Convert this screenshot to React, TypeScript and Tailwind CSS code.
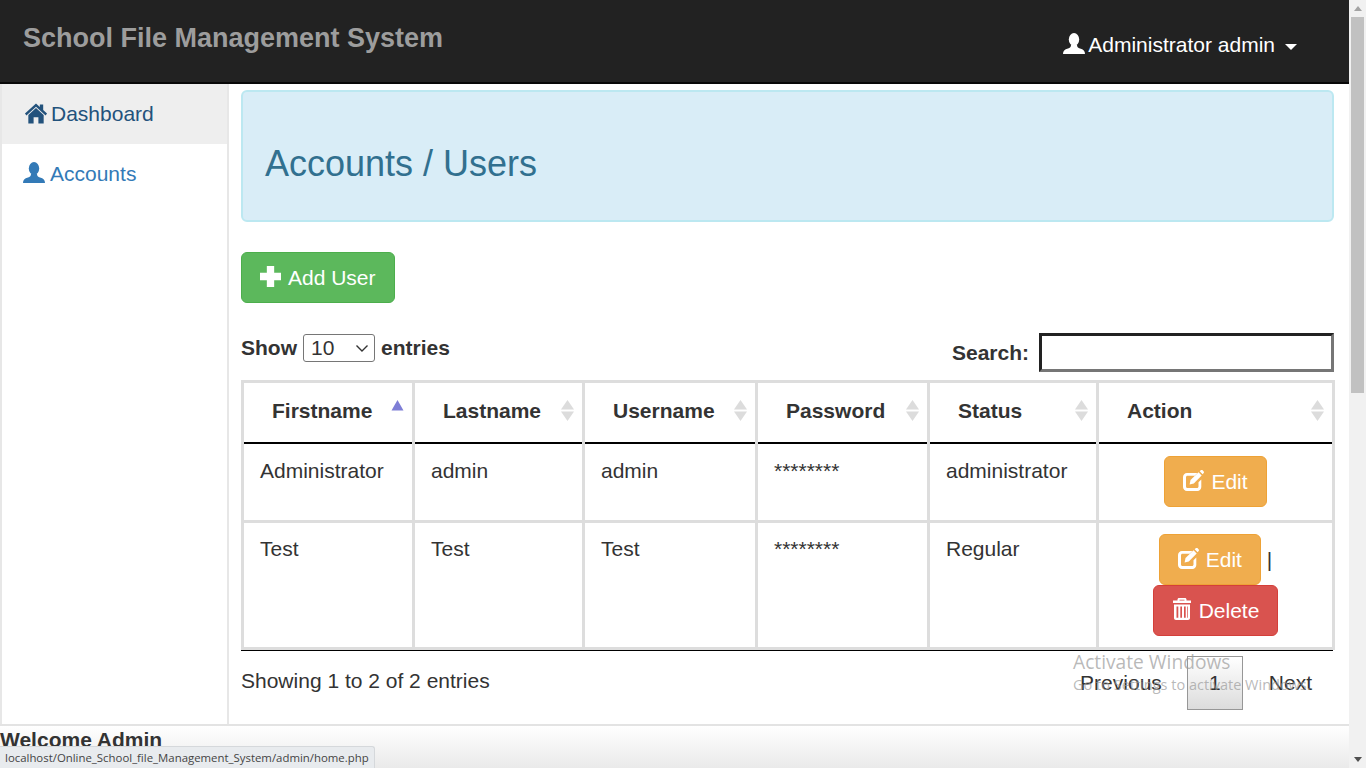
import React from "react";

const HomeIcon = ({ className }: { className?: string }) => (
  <svg viewBox="0 0 24 24" className={className} fill="currentColor">
    <path d="M12 1.5 L0.5 12 L2 14 L12 5 L22 14 L23.5 12 L19.5 8.3 V2.5 H16 V5.2 Z" />
    <path d="M4 13.6 L12 6.2 L20 13.6 V22.5 H14.5 V16 H9.5 V22.5 H4 Z" />
  </svg>
);
const UserIcon = ({ className }: { className?: string }) => (
  <svg viewBox="0 0 24 24" className={className} fill="currentColor">
    <ellipse cx="12" cy="7.5" rx="5.2" ry="6.5" />
    <path d="M1 22 C1 19 2.5 17.5 6 16.5 C8 16 9 15 9 13 H15 C15 15 16 16 18 16.5 C21.5 17.5 23 19 23 22 Z" />
  </svg>
);
const PlusIcon = ({ className }: { className?: string }) => (
  <svg viewBox="2 2 20 20" className={className} fill="currentColor">
    <path d="M8.5 2 H15.5 V8.5 H22 V15.5 H15.5 V22 H8.5 V15.5 H2 V8.5 H8.5 Z" />
  </svg>
);
const EditIcon = ({ className }: { className?: string }) => (
  <svg viewBox="2 1 21 21" className={className} fill="currentColor">
    <path d="M6 4 H16.5 L13.7 6.8 H6.5 C5.6 6.8 5 7.4 5 8.3 V17.5 C5 18.4 5.6 19 6.5 19 H16 C16.9 19 17.5 18.4 17.5 17.5 V13.3 L20.3 10.5 V18 C20.3 20.2 18.6 22 16.5 22 H6 C3.8 22 2 20.2 2 18 V8 C2 5.8 3.8 4 6 4 Z" />
    <path d="M9.5 11 L17.5 3.3 L20.7 6.5 L12.8 14.6 L8.6 15.4 Z" />
    <path d="M18.7 2.3 L20 1.1 C20.5 .7 21 .7 21.4 1.1 L22.7 2.5 C23.1 2.9 23.1 3.5 22.7 3.9 L21.6 5.2 Z" />
  </svg>
);
const TrashIcon = ({ className }: { className?: string }) => (
  <svg viewBox="3 1 18 22" className={className} fill="currentColor">
    <path d="M9 1 H15 C15.8 1 16.5 1.7 16.5 2.5 V3.5 H21 V6 H3 V3.5 H7.5 V2.5 C7.5 1.7 8.2 1 9 1 Z M9.5 2.8 V3.5 H14.5 V2.8 Z" fillRule="evenodd" />
    <path d="M4 7.5 H20 V21 C20 22.2 19.2 23 18 23 H6 C4.8 23 4 22.2 4 21 Z M6.5 9.5 V20.8 H8.3 V9.5 Z M10.3 9.5 V20.8 H12 V9.5 Z M14 9.5 V20.8 H15.7 V9.5 Z M17.2 9.5 V20.8 H17.9 V9.5 Z" fillRule="evenodd" />
  </svg>
);

const SortBoth = () => (
  <svg viewBox="0 0 13 21" className="h-[21px] w-[13px] shrink-0 text-[#dcdcdc]" fill="currentColor">
    <path d="M6.5 0 L13 9.5 H0 Z" />
    <path d="M0 11.5 H13 L6.5 21 Z" />
  </svg>
);
const SortAsc = () => (
  <svg viewBox="0 0 13 21" className="h-[21px] w-[13px] shrink-0 text-[#7e7ed6]" fill="currentColor">
    <path d="M6.5 0 L12.5 10.5 H0.5 Z" />
  </svg>
);

const btn =
  "inline-flex items-center align-middle h-[51px] px-[18px] rounded-[6px] border text-white text-[21px] leading-[30px] gap-[7px] whitespace-nowrap";

const EditButton = () => (
  <span className={`${btn} bg-[#f0ad4e] border-[#eea236]`}>
    <EditIcon className="h-[21px] w-[21px] -mt-[3px]" />
    Edit
  </span>
);

const headers = ["Firstname", "Lastname", "Username", "Password", "Status", "Action"];
const widths = ["w-[171px]", "w-[170px]", "w-[173px]", "w-[172px]", "w-[169px]", "w-[236px]"];
const td = "border-[3px] border-[#ddd] align-top pl-[16px] text-[21px] leading-[30px] text-[#333]";
const rows = [
  ["Administrator", "admin", "admin", "********", "administrator"],
  ["Test", "Test", "Test", "********", "Regular"],
];

export default function App() {
  return (
    <div className="relative flex h-[768px] w-[1366px] overflow-hidden bg-white font-['Liberation_Sans',Arial,sans-serif] text-[21px] leading-[30px] text-[#333]">
      <div className="flex w-[1349px] flex-col">
        <header className="flex h-[84px] shrink-0 items-start justify-between border-b-2 border-[#080808] bg-[#222] pl-[23px] pr-[52px]">
          <div className="mt-[23px] text-[27px] font-bold leading-[30px] text-[#9d9d9d]">School File Management System</div>
          <div className="mt-[30px] flex items-center text-white">
            <UserIcon className="mr-[2px] h-[24px] w-[24px] -mt-[3px]" />
            <span>Administrator admin</span>
            <svg viewBox="0 0 12 6" className="ml-[10px] mt-[3px] h-[6px] w-[12px]" fill="currentColor">
              <path d="M0 0 H12 L6 6 Z" />
            </svg>
          </div>
        </header>

        <div className="flex min-h-0 flex-1">
          <aside className="w-[229px] shrink-0 border-x-2 border-[#e7e7e7]">
            <div className="flex h-[60px] items-center bg-[#eee] pl-[22px] text-[#23527c]">
              <HomeIcon className="mr-[3px] h-[23px] w-[24px] -mt-[2px]" />
              Dashboard
            </div>
            <div className="flex h-[60px] items-center pl-[20px] text-[#337ab7]">
              <UserIcon className="mr-[4px] h-[24px] w-[24px] -mt-[3px]" />
              Accounts
            </div>
          </aside>

          <main className="w-[1120px] pl-[12px] pr-[15px] pt-[6px]">
            <div className="h-[132px] rounded-[6px] border-2 border-[#bce8f1] bg-[#d9edf7] pl-[22px] pt-[52px] text-[36px] leading-[40px] text-[#31708f]">
              Accounts / Users
            </div>

            <div className="mt-[30px]">
              <span className={`${btn} bg-[#5cb85c] border-[#4cae4c]`}>
                <PlusIcon className="h-[21px] w-[21px] -mt-[2px]" />
                Add User
              </span>
            </div>

            <div className="mt-[30px] flex h-[47px] items-start justify-between">
              <div className="flex items-center font-bold">
                <span>Show</span>
                <div className="relative mx-[6px] h-[28px] w-[72px]">
                  <select className="block h-[28px] w-[72px] appearance-none rounded-[3px] border border-[#767676] bg-white pb-[1px] pl-[7px] text-[21px] font-normal leading-[24px]">
                    <option>10</option>
                  </select>
                  <svg viewBox="0 0 12 7" className="pointer-events-none absolute right-[7px] top-[11px] h-[7px] w-[12px] text-[#333]" fill="none" stroke="currentColor" strokeWidth="1.4">
                    <path d="M0.5 0.5 L6 6 L11.5 0.5" />
                  </svg>
                </div>
                <span>entries</span>
              </div>
              <div className="flex items-start font-bold">
                <span className="mt-[5px]">Search:</span>
                <div className="ml-[10px] h-[39px] w-[295px] border-[3px] border-b-[#767676] border-l-[#222] border-r-[#767676] border-t-[#222] bg-white" />
              </div>
            </div>

            <div className="w-[1092px] border-b border-black">
              <table className="w-[1091px] table-fixed">
                <thead>
                  <tr className="h-[61px]">
                    {headers.map((h, i) => (
                      <th key={h} className={`${widths[i]} border-[3px] border-b-2 border-[#ddd] border-b-black p-0 pl-[28px] pr-[8px] text-left font-bold`}>
                        <div className="flex items-center justify-between pb-[3px]">
                          <span>{h}</span>
                          {i === 0 ? <SortAsc /> : <SortBoth />}
                        </div>
                      </th>
                    ))}
                  </tr>
                </thead>
                <tbody>
                  <tr className="h-[79px]">
                    {rows[0].map((c, i) => (
                      <td key={i} className={`${td} border-t-0 pt-[12px]`}>{c}</td>
                    ))}
                    <td className="border-[3px] border-t-0 border-[#ddd] text-center align-middle">
                      <EditButton />
                    </td>
                  </tr>
                  <tr className="h-[127px]">
                    {rows[1].map((c, i) => (
                      <td key={i} className={`${td} pt-[11px]`}>{c}</td>
                    ))}
                    <td className="border-[3px] border-[#ddd] px-[12px] text-center align-middle">
                      <EditButton /> <span className="align-middle">|</span>{" "}
                      <span className={`${btn} bg-[#d9534f] border-[#d43f3a]`}>
                        <TrashIcon className="h-[22px] w-[20px] -mt-[4px]" />
                        Delete
                      </span>
                    </td>
                  </tr>
                </tbody>
              </table>
            </div>

            <div className="mt-[5px] flex items-start justify-between">
              <div className="mt-[10px]">Showing 1 to 2 of 2 entries</div>
              <div className="flex items-center">
                <span className="mr-[25px]">Previous</span>
                <span className="flex h-[54px] w-[56px] items-center justify-center border border-[#979797] bg-gradient-to-b from-white to-[#dcdcdc]">1</span>
                <span className="pl-[26px] pr-[22px]">Next</span>
              </div>
            </div>
          </main>
        </div>

        <footer className="h-[44px] shrink-0 border-t-2 border-[#e3e3e3] bg-gradient-to-b from-white to-[#eaeaea] font-bold">
          <div className="-mt-[1px]">Welcome Admin</div>
        </footer>
      </div>

      <div className="flex w-[17px] flex-col bg-[#f1f1f1]">
        <div className="flex h-[17px] items-center justify-center">
          <svg viewBox="0 0 8 5" className="h-[5px] w-[8px] text-[#a3a3a3]" fill="currentColor"><path d="M4 0 L8 5 H0 Z" /></svg>
        </div>
        <div className="mx-[2px] h-[376px] bg-[#c1c1c1]" />
        <div className="flex-1" />
        <div className="flex h-[17px] items-center justify-center">
          <svg viewBox="0 0 8 5" className="h-[5px] w-[8px] text-[#505050]" fill="currentColor"><path d="M0 0 H8 L4 5 Z" /></svg>
        </div>
      </div>

      <div className="absolute bottom-0 left-0 h-[22px] w-[375px] rounded-tr-[3px] border-r border-t border-[#d5d8db] bg-[#e8ebee] pl-[5px] font-['Open_Sans',sans-serif] text-[11.4px] leading-[22px] text-[#444]">
        localhost/Online_School_file_Management_System/admin/home.php
      </div>

      <div className="pointer-events-none absolute left-[1073px] top-[649px] font-['Open_Sans',sans-serif] font-normal text-[#9a9a9a]/70">
        <div className="text-[19.2px] leading-[26px]">Activate Windows</div>
        <div className="text-[14.5px] leading-[20px]">Go to Settings to activate Windows.</div>
      </div>
    </div>
  );
}
